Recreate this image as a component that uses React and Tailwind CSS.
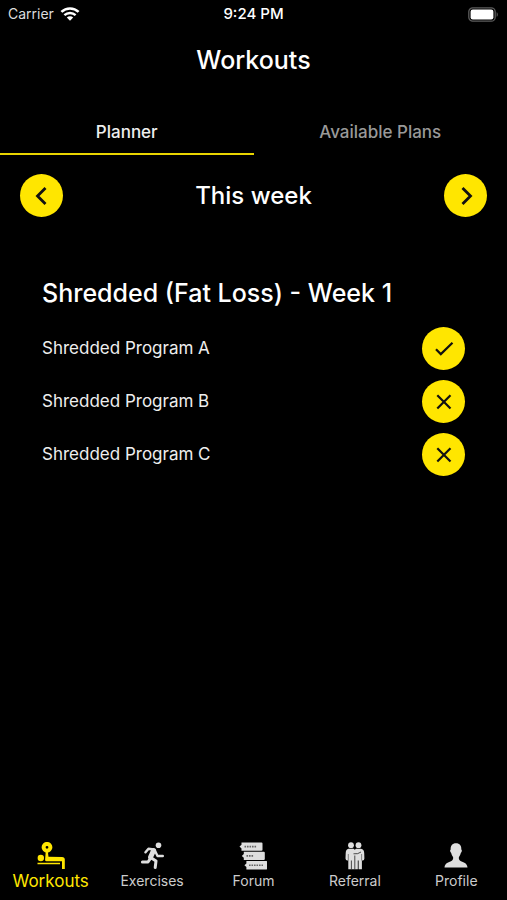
import { useState } from "react";

const workouts = [
  { name: "Shredded Program A", done: true },
  { name: "Shredded Program B", done: false },
  { name: "Shredded Program C", done: false },
];

function WifiIcon() {
  return (
    <svg width="20" height="14" viewBox="0 0 20 14" fill="none" aria-hidden="true">
      <path d="M1.4 4.9a12.4 12.4 0 0 1 17.2 0" stroke="#fff" strokeWidth="2.6" />
      <path d="M4.4 8.2a8.1 8.1 0 0 1 11.2 0" stroke="#fff" strokeWidth="2.4" />
      <path d="M10 13.8 6.8 10.6a4.6 4.6 0 0 1 6.4 0z" fill="#fff" />
    </svg>
  );
}

function BatteryIcon() {
  return (
    <svg width="31" height="15" viewBox="0 0 31 15" fill="none" aria-hidden="true">
      <rect x="0.8" y="0.8" width="26.4" height="13.4" rx="4" stroke="#5c5c5c" strokeWidth="1.3" />
      <rect x="2.6" y="2.6" width="22.8" height="9.8" rx="2.2" fill="#fff" />
      <path d="M28.6 5.2c1.6.6 1.6 4 0 4.6z" fill="#5c5c5c" />
    </svg>
  );
}

function BenchIcon() {
  return (
    <svg width="28" height="28" viewBox="0 0 28 28" fill="none" aria-hidden="true">
      <circle cx="10" cy="5.3" r="3.4" stroke="#ffe600" strokeWidth="4" />
      <circle cx="3.8" cy="16" r="3.2" fill="#ffe600" />
      <path
        d="M8.7 10h2.2l.6 4.700 13.500.3q2.800.2 2.800 2.600v9.400h-2.800v-7.800H9.500q-1.500 0-1.400-1.500z"
        fill="#ffe600"
      />
      <path d="M0.500 21.500h22.500" stroke="#ffe600" strokeWidth="1.500" />
    </svg>
  );
}

function RunIcon() {
  return (
    <svg width="24" height="28" viewBox="0 0 24 28" fill="none" aria-hidden="true">
      <circle cx="18.5" cy="3.2" r="2.8" fill="#dedede" />
      <g stroke="#dedede" strokeLinecap="round" strokeLinejoin="round">
        <path d="M5.500 10.300 8.500 6.800l5.200.6" strokeWidth="2.500" />
        <path d="M13.500 8.600 10.600 15" strokeWidth="5" />
        <path d="m15 8.700 2.500 5.300h5.300" strokeWidth="2.400" />
        <path d="M10.600 16.200 8 20H2.400" strokeWidth="3" />
        <path d="m11 15.700 5 3.300-.8 6.500" strokeWidth="3" />
      </g>
    </svg>
  );
}

function ForumIcon() {
  return (
    <svg width="28" height="28" viewBox="0 0 28 28" fill="none" aria-hidden="true">
      <g fill="#dedede">
        <path d="M2.500.5h20q1 0 1 1v6.300q0 1-1 1h-20V6.500L.5 4.600l2-1.800z" />
        <path d="M4.800 9.800h20q1 0 1 1v6.300q0 1-1 1h-20v-2.300l-2-1.900 2-1.800z" />
        <path d="M7.400 19.100h20q1 0 1 1v6.300q0 1-1 1h-20v-2.300l-2-1.900 2-1.800z" />
      </g>
      <g stroke="#666" strokeWidth="1.600" strokeDasharray="1.600 0.900">
        <path d="M5.500 4.600h12" />
        <path d="M7.500 13.900h7" />
        <path d="M10 23.200h14" />
      </g>
    </svg>
  );
}

function FriendsIcon() {
  return (
    <svg width="22" height="28" viewBox="0 0 22 28" fill="none" aria-hidden="true">
      <g fill="#dedede">
        <circle cx="7" cy="3.2" r="2.9" />
        <circle cx="14.500" cy="3.2" r="2.9" />
        <path d="M4.500 6.800h5l1.300 1 1.200-1h5q3 .4 3.200 4.200l.2 5.500q-.1 1.800-1.600 2l-.9.100V27.200h-3.300V18.500h-.8V27.200H4.300V18.600l-.9-.1q-1.800-.2-1.900-2l.2-5.500Q1.900 7.200 4.500 6.800z" />
      </g>
      <g stroke="#222" strokeWidth="0.800">
        <path d="M9.500 11.800q4.500.6 7.500-1.800" />
        <path d="M10.800 13.500v14" />
        <path d="M7.400 18.500v9" />
        <path d="M4.300 12v6.500M17.600 12v6.500" strokeWidth="0.500" />
      </g>
    </svg>
  );
}

function PersonIcon() {
  return (
    <svg width="24" height="28" viewBox="0 0 24 28" aria-hidden="true">
      <path
        d="M12 1.200c3.700 0 5.700 2.500 5.300 6.400.9.200.7 2.500-.5 3.500-.4 2-1.100 3-1.900 3.900-.3 2.300.3 3.300 2.100 4.200 3.300 1.300 6 2 6.500 6.300H.5c.5-4.300 3.200-5 6.500-6.300 1.800-.9 2.400-1.900 2.100-4.200-.8-.9-1.500-1.900-1.900-3.900-1.200-1-1.400-3.300-.5-3.500C6.300 3.700 8.300 1.200 12 1.200z"
        fill="#dedede"
      />
    </svg>
  );
}

const navItems = [
  { label: "Workouts", Icon: BenchIcon },
  { label: "Exercises", Icon: RunIcon },
  { label: "Forum", Icon: ForumIcon },
  { label: "Referral", Icon: FriendsIcon },
  { label: "Profile", Icon: PersonIcon },
];

function RoundButton({ label, onClick, children }) {
  return (
    <button
      type="button"
      aria-label={label}
      onClick={onClick}
      className="flex size-[43px] shrink-0 items-center justify-center rounded-full bg-[#ffe600]"
    >
      <svg
        width="24"
        height="24"
        viewBox="0 0 24 24"
        fill="none"
        stroke="#111"
        aria-hidden="true"
      >
        {children}
      </svg>
    </button>
  );
}

export default function App() {
  const [tab, setTab] = useState("Planner");
  const [items, setItems] = useState(workouts);

  const toggle = (name) =>
    setItems(items.map((w) => (w.name === name ? { ...w, done: !w.done } : w)));

  return (
    <div className="flex min-h-screen flex-col bg-black font-['Inter',sans-serif] text-white">
      {/* status bar */}
      <div className="grid h-7 grid-cols-3 items-center px-2 text-sm">
        <div className="flex items-center gap-1.5 text-[#dddddd]">
          <span>Carrier</span>
          <WifiIcon />
        </div>
        <span className="text-center text-[15px] font-medium">9:24 PM</span>
        <div className="flex justify-end">
          <BatteryIcon />
        </div>
      </div>

      <header className="flex h-16 items-center justify-center">
        <h1 className="text-[25px] leading-8 font-medium">Workouts</h1>
      </header>

      {/* tabs */}
      <div role="tablist" className="mt-4 grid grid-cols-2">
        {["Planner", "Available Plans"].map((name) => (
          <button
            key={name}
            type="button"
            role="tab"
            aria-selected={tab === name}
            onClick={() => setTab(name)}
            className={`h-[47px] border-b-2 pt-1 text-[17px] font-medium ${
              tab === name ? "border-[#e8d400] text-[#eeeeee]" : "border-transparent text-[#999999]"
            }`}
          >
            {name}
          </button>
        ))}
      </div>

      <main className="grow">
        <div className="mt-[19px] flex items-center justify-between px-5">
          <RoundButton label="Previous week">
            <path d="m15.500 4-8 8 8 8" strokeWidth="2.800" />
          </RoundButton>
          <h2 className="text-2xl font-medium">This week</h2>
          <RoundButton label="Next week">
            <path d="m8.500 4 8 8-8 8" strokeWidth="2.800" />
          </RoundButton>
        </div>

        <section className="mt-[60px] px-[42px]">
          <h3 className="text-[25px] leading-8 font-medium">Shredded (Fat Loss) - Week 1</h3>
          <ul className="mt-[18px] flex flex-col gap-2.5">
            {items.map((w) => (
              <li key={w.name} className="flex items-center justify-between">
                <span className="text-[17px] text-[#eeeeee]">{w.name}</span>
                <RoundButton
                  label={`${w.name}: ${w.done ? "completed" : "not completed"}`}
                  onClick={() => toggle(w.name)}
                >
                  {w.done ? (
                    <path d="m4 12.300 4.800 4.800L20.500 5.800" strokeWidth="2.200" />
                  ) : (
                    <path d="m5.300 5.300 13.200 13.200M18.500 5.300 5.300 18.500" strokeWidth="2.200" />
                  )}
                </RoundButton>
              </li>
            ))}
          </ul>
        </section>
      </main>

      {/* bottom navigation */}
      <nav className="grid grid-cols-5 pb-[9px]">
        {navItems.map(({ label, Icon }, i) => (
          <a
            key={label}
            href={`#${label.toLowerCase()}`}
            aria-current={i === 0 ? "page" : undefined}
            className={`flex flex-col items-center gap-px ${
              i === 0 ? "text-[17px] leading-5 text-[#ffe600]" : "text-sm leading-5 text-[#cccccc]"
            }`}
          >
            <Icon />
            {label}
          </a>
        ))}
      </nav>
    </div>
  );
}
